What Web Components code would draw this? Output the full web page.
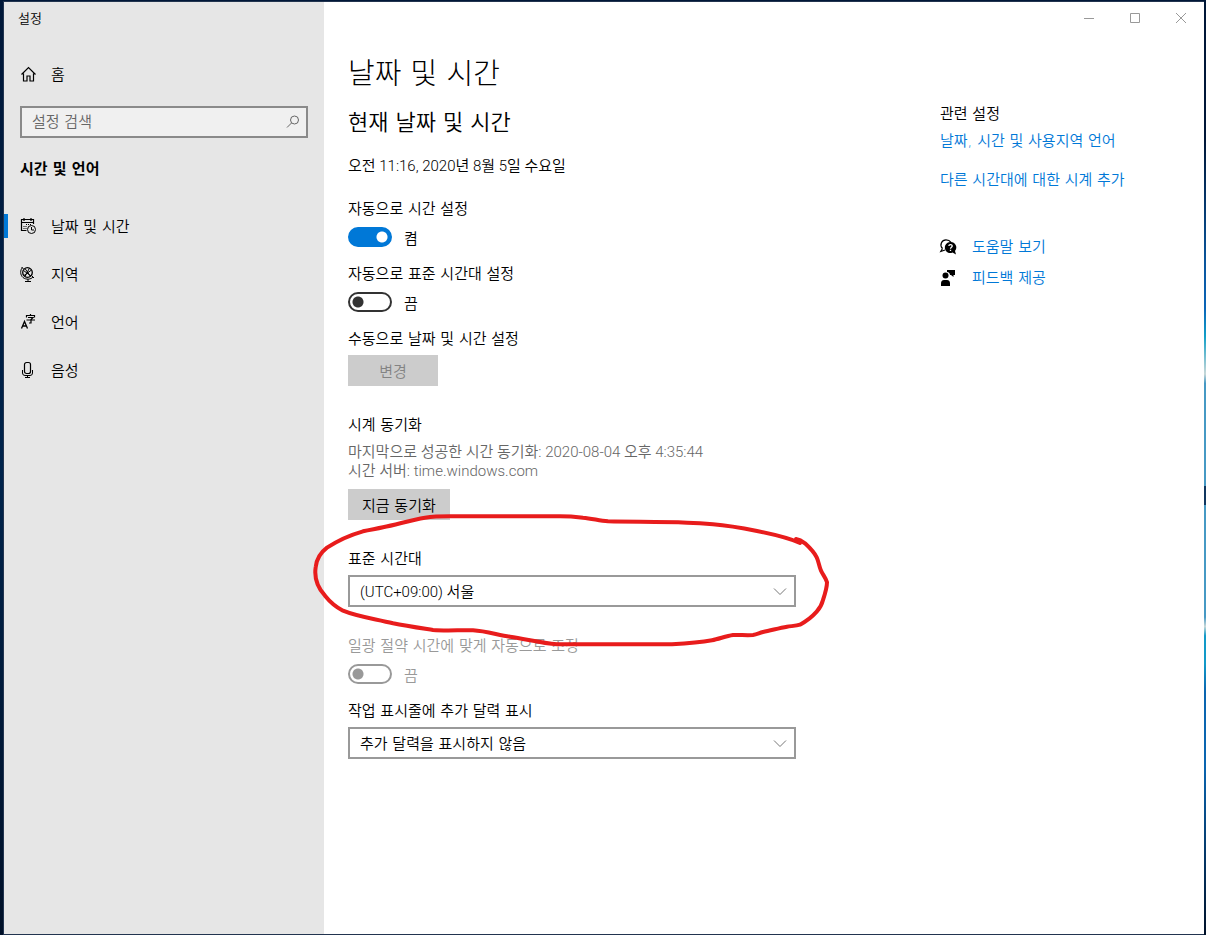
<!DOCTYPE html>
<html lang="ko">
<head>
<meta charset="utf-8">
<meta name="viewport" content="width=device-width, initial-scale=1">
<title>설정</title>
<style>
  html, body { margin: 0; }
  body {
    --font-ko: "DejaVu Sans", "Noto Sans CJK KR", sans-serif;
    --font-mixed: Roboto, "Noto Sans CJK KR", sans-serif;
    --accent: #0078d7;
    --line: #999;
    font: 350 15px/22px var(--font-ko);
    color: #000;
  }
</style>
</head>
<body>
<settings-desktop>
  <settings-window>
    <side-bar slot="side" app="설정" heading="시간 및 언어">
      <nav-item slot="home" icon="home">홈</nav-item>
      <nav-item icon="calendar" active>날짜 및 시간</nav-item>
      <nav-item icon="globe">지역</nav-item>
      <nav-item icon="language">언어</nav-item>
      <nav-item icon="mic">음성</nav-item>
    </side-bar>

    <date-time-page slot="main"></date-time-page>

    <related-panel slot="related" heading="관련 설정">
      <related-link>날짜, 시간 및 사용지역 언어</related-link>
      <related-link>다른 시간대에 대한 시계 추가</related-link>
      <related-link slot="support" icon="help">도움말 보기</related-link>
      <related-link slot="support" icon="feedback">피드백 제공</related-link>
    </related-panel>
  </settings-window>
</settings-desktop>

<script>
const ICONS = {
  home: '<path d="M1.5 8.5 8.5 1.5l7 7M3.500 7.500v7.500h3.500v-5h3v5h3.500V7.500" stroke-width="1.200"/>',
  calendar: '<path d="M6.500 12.500H1.500V1.500h12V6M1.500 4.500h12M4 0v3M11 0v3" stroke-width="1.200"/><path d="M6 6.500h1M8 6.500h1M10 6.500h1M3.500 8.500h1M5.500 8.500h1M3.500 10.500h1M5.500 10.500h1"/><circle cx="11.500" cy="11.500" r="4"/><path d="M11.500 9v3h2.500"/>',
  globe: '<circle cx="7.500" cy="6.500" r="4.800" stroke-width="1.300"/><path d="M3.500 4.500 11 10M4 9.500 11.500 4M5 2.500l5.500 8M9.500 2 5 10.500"/><path d="M2.500 1.500C0 4 0 9 3 11.500c3 2.500 8 2 10-.5M1.500 1l2 2M12 10l2 2M8 13v2M5 15.500h6"/>',
  language: '<path d="M1.500 14.500 4.500 7.500l3 7M2.500 12h4" stroke-width="1.300"/><path d="M10.500 0v1.500M6.500 3.500v-2h8v2M8 3.500h5l-2 2v3.500H9M6.500 6h8.500" stroke-width="1.200"/>',
  mic: '<rect x="4.500" y=".5" width="6" height="11" rx="2" stroke-width="1.200"/><path d="M2.500 8v3q0 2.500 2.500 2.500h5q2.500 0 2.500-2.500V8M7.500 13.500v2M5 15.500h5"/>',
  help: '<path d="M2.500 9.500C-1 5.500 2 .8 6 .8c2.500 0 4 1 5 2.500M2.500 9.500.8 12.500 5 11" stroke-width="1.200"/><path fill="#000" stroke="none" d="M10.500 3a5.500 5.500 0 1 0 2 10.500L16 15.500l-1-3.500A5.500 5.500 0 0 0 10.500 3z"/><path stroke="#fff" stroke-width="1.300" d="M8.800 7c.2-2 3.500-1.800 3.400.1 0 1.200-1.700 1.200-1.700 2.600M10.500 10.700v1.200"/>',
  feedback: '<g fill="#000" stroke="none"><path d="M7 0h8v5h-1.500v2L11 5h-1C10 3.500 9 2 7 2z"/><circle cx="5.500" cy="5.500" r="3"/><path d="M1 16v-2.500q0-3.500 3-3.500h3q3 0 3 3.500V16z"/></g>',
  search: '<circle cx="10.500" cy="6" r="4"/><path d="M7.500 9 3 13.500"/>',
  chevron: '<path d="m2 5.500 6 6 6-6"/>'
};
const icon = name => `<svg width="16" height="16" viewBox="0 0 16 16" fill="none" stroke="currentColor" overflow="visible" aria-hidden="true">${ICONS[name]}</svg>`;

function define(name, render) {
  customElements.define(name, class extends HTMLElement {
    connectedCallback() {
      if (this.shadowRoot) return;
      this.attachShadow({ mode: 'open' }).innerHTML =
        `<style>*{box-sizing:border-box}svg{display:block;flex:none}:host{display:block}</style>` + render(this);
    }
  });
}

/* The wallpaper shows only as a thin edge round the window. */
define('settings-desktop', () => `
  <style>
    :host {
      box-sizing: border-box; min-height: 100vh; padding: 1px 2px 0 3px; display: flex;
      background:
        linear-gradient(#001738 0 15%, #0a559c 28%, #0a65b8 33%, #12a0c8 36%, #c8d8d8 40%, #4699c4 41% 52%, #10365f 52% 54%, #4699c4 54% 66%, #c8d8d8 67%, #129ac8 68% 71%, #0a65b0 74% 82%, #001028) right / 2px 100% no-repeat,
        linear-gradient(#001738, #00244c 50%, #001028);
    }
    ::slotted(*) { flex: 1; min-width: 0; }
  </style><slot></slot>`);

define('settings-window', () => `
  <style>
    :host { box-sizing: border-box; display: flex; border: 1px solid #22344f; border-right: 0; background: #fff; }
    .body { flex: 1; min-width: 0; }
    .columns { display: grid; grid-template-columns: minmax(200px, 448px) minmax(180px, 1fr); column-gap: 144px; padding: 18px 24px 24px; }
    @media (max-width: 1100px) { .columns { column-gap: 32px; } }
  </style>
  <slot name="side"></slot>
  <div class="body">
    <window-controls></window-controls>
    <div class="columns"><slot name="main"></slot><slot name="related"></slot></div>
  </div>`);

define('window-controls', () => `
  <style>
    :host { display: flex; justify-content: flex-end; height: 32px; }
    button { width: 46px; padding: 0; border: 0; background: none; color: #999; display: grid; place-items: center; }
  </style>
  <button aria-label="최소화"><svg width="12" height="12" fill="none" stroke="currentColor"><path d="M1 6.500h10"/></svg></button>
  <button aria-label="최대화"><svg width="12" height="12" fill="none" stroke="currentColor"><path d="M1.500 1.500h9v9h-9z"/></svg></button>
  <button aria-label="닫기"><svg width="12" height="12" fill="none" stroke="currentColor"><path d="m1 1 10 10M11 1 1 11"/></svg></button>`);

define('side-bar', el => `
  <style>
    :host { flex: 0 0 320px; background: #e6e6e6; }
    .app { font-size: 13px; line-height: 34px; padding-left: 14px; margin-bottom: 14px; }
    .search { display: flex; align-items: center; margin: 8px 16px 20px; height: 32px; padding: 0 6px 0 10px; border: 2px solid #8a8a8a; background: #f0f0f0; color: #666; }
    input { flex: 1; min-width: 0; padding: 0; border: 0; outline: 0; background: none; font: inherit; color: #000; }
    input::placeholder { color: #666; opacity: 1; }
    h2 { margin: 0 0 22px; padding-left: 16px; font-size: 15px; line-height: 22px; font-weight: 700; }
  </style>
  <div class="app">${el.getAttribute('app')}</div>
  <slot name="home"></slot>
  <label class="search"><input type="text" placeholder="설정 검색" aria-label="설정 검색">${icon('search')}</label>
  <h2>${el.getAttribute('heading')}</h2>
  <nav><slot></slot></nav>`);

define('nav-item', el => `
  <style>
    a { display: flex; align-items: center; gap: 15px; height: 48px; padding-left: 16px; color: inherit; text-decoration: none; line-height: 24px;
        background: linear-gradient(var(--accent), var(--accent)) left center / var(--bar, 0) 24px no-repeat; }
    span { padding-top: 2px; }
    :host([active]) { --bar: 4px; }
  </style>
  <a href="#">${icon(el.getAttribute('icon'))}<span><slot></slot></span></a>`);

define('toggle-switch', el => `
  <style>
    :host([disabled]) { color: #999; }
    .row { display: flex; align-items: center; gap: 12px; height: 20px; margin-top: 7px; }
    .row span { padding-top: 4px; }
    label { display: block; }
    input { appearance: none; margin: 0; width: 44px; height: 20px; border: 2px solid #333; border-radius: 10px;
            background: radial-gradient(circle at 8px 8px, #333 5px, transparent 6px); }
    input:checked { border-color: var(--accent); background: radial-gradient(circle at 32px 8px, #fff 5px, var(--accent) 6px) border-box; background-origin: padding-box; }
    input:disabled { border-color: var(--line); background: radial-gradient(circle at 8px 8px, #999 5px, transparent 6px); }
  </style>
  <label for="t">${el.getAttribute('label')}</label>
  <div class="row"><input id="t" type="checkbox" role="switch" ${el.hasAttribute('on') ? 'checked' : ''} ${el.hasAttribute('disabled') ? 'disabled' : ''}><span>${el.hasAttribute('on') ? '켬' : '끔'}</span></div>`);

define('push-button', el => `
  <style>
    button { display: block; height: 31px; min-width: 90px; padding: 2px 14px 0; border: 0; background: #ccc; color: #000; font: inherit; }
    button:disabled { color: #838383; }
  </style>
  <button ${el.hasAttribute('disabled') ? 'disabled' : ''}><slot></slot></button>`);

define('drop-down', el => `
  <style>
    label { display: block; margin-bottom: 5px; }
    .box { display: grid; align-items: center; }
    select, svg { grid-area: 1 / 1; }
    svg { justify-self: end; margin-right: 8px; color: #777; pointer-events: none; }
    select { appearance: none; width: 100%; height: 32px; padding: 2px 32px 0 10px; border: 2px solid var(--line); border-radius: 0; background: #fff; color: #000; font: inherit; font-family: var(--value-font, inherit); }
    :host([mixed]) { --value-font: var(--font-mixed); }
  </style>
  <label for="s">${el.getAttribute('label')}</label>
  <div class="box"><select id="s"><option>${el.getAttribute('value')}</option></select>${icon('chevron')}</div>`);

/* Freehand red marker loop laid over the field it is slotted round. */
define('ink-loop', () => `
  <style>
    :host { position: relative; }
    svg { position: absolute; left: -36px; top: -36px; z-index: 1; pointer-events: none; }
  </style>
  <slot></slot>
  <svg width="520" height="136" viewBox="312 512 520 136" fill="none" stroke="#e81c1c" stroke-width="4" stroke-linecap="round" stroke-linejoin="round" aria-hidden="true">
    <path d="M800 543C787 537 772 534 757 531C742 528 728 525.500 713 524.300C704 523.500 696 523 687 522.700C660 521.500 634 522 608 521.300C599 520.500 592 518.500 583 517.700C575 516.800 568 516.300 560 516.300H450C441 516.300 433 516.500 425 517.700C411 520 397 524.500 383 527.300C376 529 370 529.500 363 531.300C350 535 337 541 327 547.700C320 553 316.500 560 315.700 567C314 578 318 588 325 595.700C330 602 336 607 343 610.700C358 617 376 619 393 623.300C406 626 420 628 433 630C446 631 460 630 473 630.300C486 631 498 635 510 636.700C526 639 541 643 557 644.300H672C685 643.500 699 642.500 712 640.300C719 639 726 636 733 635C740 634.700 746 635.500 753 635C757 634.500 759 633 763 632C771 630.500 779 628 787 626.700C791 626 796 626 800 624.700C807 621 812 617 816.700 611.700C820 608 822 604 823 600C825 594 827 588 827 582.300C826 578 823 575 821 570.700C819 566 818.500 561 816.700 557.300C814 552 809 547 805 543.300C802 541 799 539.500 796 539"/>
  </svg>`);

define('date-time-page', () => `
  <style>
    h1 { margin: 0 0 13px; font-size: 29px; line-height: 44px; font-weight: 300; }
    h2 { margin: 0 0 18px; font-size: 22px; line-height: 28px; font-weight: 350; }
    p { margin: 0; }
    .mixed { font-family: var(--font-mixed); }
    .now { margin-bottom: 21px; }
    .stack { display: grid; gap: 16px; }
    .group { margin-bottom: 28px; }
    .group > p:first-child { margin-bottom: 5px; }
    .status { color: #666; line-height: 19px; padding: 2px 0 8px; }
  </style>
  <h1>날짜 및 시간</h1>
  <h2>현재 날짜 및 시간</h2>
  <p class="now mixed">오전 11:16, 2020년 8월 5일 수요일</p>
  <div class="stack">
    <toggle-switch label="자동으로 시간 설정" on></toggle-switch>
    <toggle-switch label="자동으로 표준 시간대 설정"></toggle-switch>
    <div class="group"><p>수동으로 날짜 및 시간 설정</p><push-button disabled>변경</push-button></div>
  </div>
  <div class="group">
    <p>시계 동기화</p>
    <p class="status mixed">마지막으로 성공한 시간 동기화: 2020-08-04 오후 4:35:44<br>시간 서버: time.windows.com</p>
    <push-button>지금 동기화</push-button>
  </div>
  <ink-loop class="group"><drop-down mixed label="표준 시간대" value="(UTC+09:00) 서울"></drop-down></ink-loop>
  <div class="stack">
    <toggle-switch label="일광 절약 시간에 맞게 자동으로 조정" disabled></toggle-switch>
    <drop-down label="작업 표시줄에 추가 달력 표시" value="추가 달력을 표시하지 않음"></drop-down>
  </div>`);

define('related-panel', el => `
  <style>
    :host { padding-top: 51px; }
    h2 { margin: 0 0 5px; font-size: 15px; line-height: 22px; font-weight: 350; }
    .links { display: grid; gap: 17px; margin-bottom: 45px; }
    .support { display: grid; gap: 9px; }
  </style>
  <h2>${el.getAttribute('heading')}</h2>
  <div class="links"><slot></slot></div>
  <div class="support"><slot name="support"></slot></div>`);

define('related-link', el => `
  <style>
    :host { display: flex; align-items: center; gap: 16px; }
    a { color: var(--accent); text-decoration: none; }
  </style>
  ${el.hasAttribute('icon') ? icon(el.getAttribute('icon')) : ''}<a href="#"><slot></slot></a>`);
</script>
</body>
</html>
